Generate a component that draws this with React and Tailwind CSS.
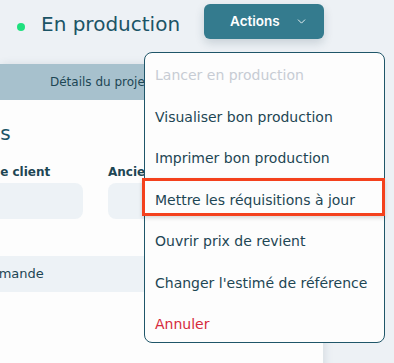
import { ChevronDown } from "lucide-react";

const items = [
  { label: "Lancer en production", tone: "disabled" },
  { label: "Visualiser bon production" },
  { label: "Imprimer bon production" },
  { label: "Mettre les réquisitions à jour" },
  { label: "Ouvrir prix de revient" },
  { label: "Changer l'estimé de référence" },
  { label: "Annuler", tone: "danger" },
];

function ActionsMenu() {
  return (
    <div className="absolute left-[144px] top-[52px] h-[291px] w-[241px] rounded-lg border border-[#1f5669] bg-[#fdfdfd] pt-[2px]">
      {items.map((item) => (
        <div
          key={item.label}
          className={
            "flex h-[41.5px] items-center pl-[10px] text-[14px] " +
            (item.tone === "disabled"
              ? "text-[#c7ccd4]"
              : item.tone === "danger"
              ? "text-[#d62a3c]"
              : "text-[#1d4654]")
          }
        >
          {item.label}
        </div>
      ))}
    </div>
  );
}

export default function App() {
  return (
    <div className="relative h-[363px] w-[394px] overflow-hidden bg-[#edf1f5] font-['DejaVu_Sans',sans-serif]">
      {/* Header */}
      <div className="flex items-center pt-[4px]">
        <span className="ml-[17px] mt-[10px] h-[8px] w-[8px] rounded-full bg-[#1fe07e]" />
        <h1 className="ml-[16px] mt-[4px] text-[20px] text-[#1b5466]">En production</h1>
        <button className="ml-[24px] flex h-[35px] w-[120px] items-center rounded-md bg-[#347b8e] pl-[26px] font-['Inter',sans-serif] text-[13.5px] font-semibold text-white shadow-[0_4px_10px_rgba(30,60,80,0.18)]">
          Actions
          <ChevronDown className="ml-[15px] h-[13px] w-[13px]" strokeWidth={1.6} />
        </button>
      </div>

      {/* Card */}
      <div className="mt-[25px] w-[323px] bg-[#fdfdfd] shadow-[2px_0_8px_rgba(60,80,100,0.12)]">
        <div className="flex h-[36px] items-center bg-[#a7c1cd] pl-[50px] text-[12px] text-[#1d4654]">
          Détails du projet
        </div>
        <div className="-ml-[66px] h-[300px] pr-[14px]">
          <h2 className="ml-[2px] mt-[21px] text-[20px] leading-[24px] text-[#1b5466]">Articles</h2>
          <div className="mt-[19px] grid grid-cols-[149px_149px] gap-x-[25px]">
            <div>
              <div className="text-[12px] font-bold leading-[16px] text-[#1d4654]">Numéro de client</div>
              <div className="mt-[3px] h-[36px] rounded-lg bg-[#edf2f6]" />
            </div>
            <div>
              <div className="text-[12px] font-bold leading-[16px] text-[#1d4654]">Ancien numéro</div>
              <div className="mt-[3px] h-[36px] rounded-lg bg-[#edf2f6]" />
            </div>
          </div>
          <div className="mt-[37px] flex h-[36px] items-center bg-[#edf2f6] pl-[35px] text-[13px] text-[#1d4654]">
            Commande
          </div>
        </div>
      </div>

      <ActionsMenu />

      {/* Highlight */}
      <div className="absolute left-[142px] top-[178px] h-[38px] w-[243px] border-[3px] border-[#f4411d] shadow-[0_2px_4px_rgba(0,0,0,0.15)]" />
    </div>
  );
}
